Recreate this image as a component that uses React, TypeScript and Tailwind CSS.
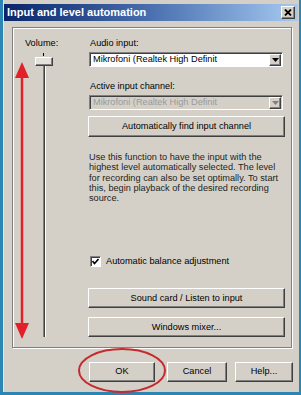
import React from 'react';

const raised =
    'border border-t-white border-l-white border-r-[#404040] border-b-[#404040] shadow-[inset_-1px_-1px_0_#808080] bg-[#d4d0c8]';
const sunken =
    'border border-t-[#808080] border-l-[#808080] border-r-white border-b-white shadow-[inset_1px_1px_0_#404040]';

function DropArrow({ disabled }: { disabled?: boolean }) {
    return (
        <div className={`flex h-[12px] w-[12px] items-center justify-center ${raised}`}>
            <svg width="7" height="4" viewBox="0 0 7 4">
                <polygon points="0,0 7,0 3.5,4" fill={disabled ? '#808080' : '#000'} />
            </svg>
        </div>
    );
}

function Combo({ disabled }: { disabled?: boolean }) {
    return (
        <div
            className={`flex h-[15px] w-[194px] items-center justify-between pl-[3px] pr-[1px] ${sunken} ${
                disabled ? 'bg-[#d4d0c8] text-[#9a9a9a]' : 'bg-white text-black'
            }`}
        >
            <span className="leading-none">Mikrofoni (Realtek High Definit</span>
            <DropArrow disabled={disabled} />
        </div>
    );
}

function Btn({ label, className = '' }: { label: string; className?: string }) {
    return (
        <div className={`flex items-center justify-center ${raised} ${className}`}>
            <span className="leading-none">{label}</span>
        </div>
    );
}

export default function App() {
    return (
        <div className="relative h-[395px] w-[301px] overflow-hidden bg-[#2b86b4] pl-[3px] pr-[2px] font-['Liberation_Sans',Arial,sans-serif] text-[9.2px] text-black">
            <div className="flex h-[392px] flex-col bg-[#d4d0c8] px-[1px] pt-[4px] shadow-[inset_1px_0_0_#e8e6e0]">
                {/* title bar */}
                <div className="flex h-[17px] items-center justify-between bg-gradient-to-r from-[#0a246a] via-[#4a70b0] to-[#a6caf0] pl-[3px] pr-[3px]">
                    <span className="text-[11px] font-bold leading-none text-white">Input and level automation</span>
                    <div className={`flex h-[13px] w-[14px] items-center justify-center ${raised}`}>
                        <svg width="8" height="7" viewBox="0 0 8 7">
                            <path d="M1 0.5 L7 6.5 M7 0.5 L1 6.5" stroke="#000" strokeWidth="1.8" />
                        </svg>
                    </div>
                </div>

                {/* group box */}
                <div className="ml-[8px] mt-[6px] flex h-[321px] w-[280px] border border-[#808080] pt-[10px] shadow-[1px_1px_0_#fff,inset_1px_1px_0_#fff]">
                    <div className="flex w-[75px] flex-col">
                        <span className="h-[11px] pl-[12px] leading-[11px]">Volume:</span>
                        <div className="relative ml-[22px] mt-[4px] flex h-[284px] w-[18px] justify-center">
                            <div className="mt-[4px] h-[280px] w-[3px] border-l border-l-[#808080] border-r border-r-white bg-[#404040]" />
                            <div className="absolute left-[8px] top-0 h-[3px] w-[1px] bg-black" />
                            <div className={`absolute left-0 top-[4px] h-[9px] w-[18px] ${raised} bg-[#e4e2dc]`} />
                        </div>
                    </div>

                    <div className="flex w-[197px] flex-col">
                        <span className="h-[11px] pl-[2px] leading-[11px]">Audio input:</span>
                        <div className="mt-[3px] pl-[1px]">
                            <Combo />
                        </div>
                        <span className="mt-[14px] h-[11px] pl-[2px] leading-[11px]">Active input channel:</span>
                        <div className="mt-[3px] pl-[1px]">
                            <Combo disabled />
                        </div>
                        <Btn label="Automatically find input channel" className="mt-[6px] h-[21px] w-[197px]" />
                        <p className="mt-[15px] whitespace-nowrap pl-[1px] leading-[10.3px] text-[#1e1e1e]">
                            Use this function to have the input with the
                            <br />
                            highest level automatically selected. The level
                            <br />
                            for recording can also be set optimally. To start
                            <br />
                            this, begin playback of the desired recording
                            <br />
                            source.
                        </p>
                        <div className="ml-[2px] mt-[52px] flex h-[12px] items-center gap-[5px]">
                            <div className={`flex h-[11px] w-[11px] items-center justify-center bg-white ${sunken}`}>
                                <svg width="7" height="7" viewBox="0 0 7 7">
                                    <path d="M0.5 3 L2.5 5.5 L6.5 1" stroke="#000" strokeWidth="1.6" fill="none" />
                                </svg>
                            </div>
                            <span className="leading-none">Automatic balance adjustment</span>
                        </div>
                        <Btn label="Sound card / Listen to input" className="mt-[21px] h-[20px] w-[197px]" />
                        <Btn label="Windows mixer..." className="mt-[9px] h-[20px] w-[197px]" />
                    </div>
                </div>

                {/* dialog buttons */}
                <div className="ml-[85px] mt-[14px] flex">
                    <Btn label="OK" className="h-[20px] w-[66px]" />
                    <Btn label="Cancel" className="ml-[12px] h-[20px] w-[60px]" />
                    <Btn label="Help..." className="ml-[8px] h-[20px] w-[58px]" />
                </div>
            </div>

            {/* red annotations */}
            <svg className="absolute left-[14px] top-[62px]" width="16" height="277" viewBox="0 0 16 277">
                <line x1="8" y1="12" x2="8" y2="265" stroke="#e3202a" strokeWidth="2.5" />
                <polygon points="1,16 8,0 15,16" fill="#e3202a" />
                <polygon points="1,261 8,277 15,261" fill="#e3202a" />
            </svg>
            <svg className="absolute left-[77px] top-[347px]" width="90" height="48" viewBox="0 0 90 48">
                <ellipse cx="45" cy="23.5" rx="43" ry="21.5" fill="none" stroke="#c42a2e" strokeWidth="2" />
            </svg>
        </div>
    );
}
